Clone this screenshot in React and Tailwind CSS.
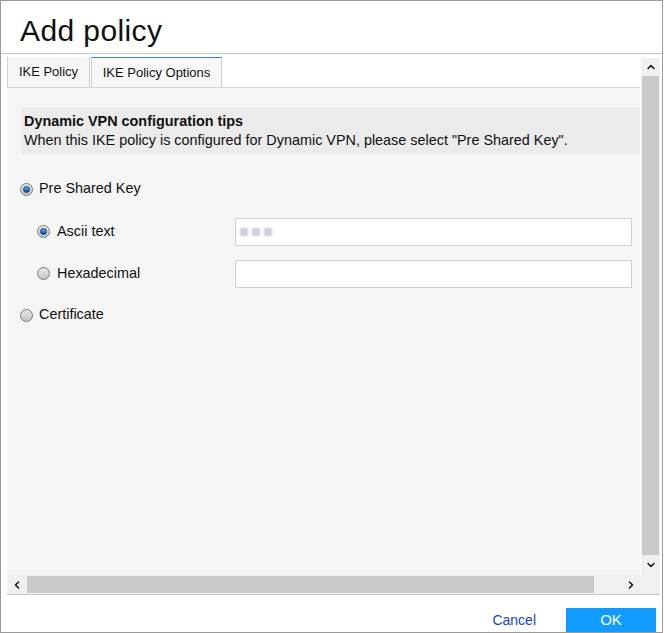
import { ChevronUp, ChevronDown, ChevronLeft, ChevronRight } from "lucide-react";

function Radio({ checked }) {
  return (
    <span className="relative inline-flex w-[13px] h-[13px] rounded-full border border-[#7a7a7a] bg-gradient-to-b from-[#e8e8e8] to-[#c4c4c4] items-center justify-center shrink-0">
      {checked && (
        <span className="w-[7px] h-[7px] rounded-full bg-gradient-to-b from-[#5fb4f0] to-[#0a4f9e] border border-[#083d7a]" />
      )}
    </span>
  );
}

function App() {
  return (
    <div
      className="w-[663px] h-[633px] bg-white border border-[#9a9a9a] flex flex-col text-[#111]"
      style={{ fontFamily: '"Liberation Sans", Arial, sans-serif' }}
    >
      {/* header */}
      <div className="h-[53px] border-b border-[#c6c6c6] flex items-center pl-[19px] pt-[7px] shrink-0">
        <h1 className="text-[30px] leading-none tracking-[0.4px]">Add policy</h1>
      </div>

      {/* body */}
      <div className="flex-1 flex flex-col pl-[6px] pr-[2px] pt-[4px]">
        <div className="flex flex-1">
          <div className="flex-1 flex flex-col">
            {/* tabs */}
            <div className="h-[30px] flex items-end border-b border-[#d6d6d6] shrink-0">
              <div className="h-[30px] w-[83px] border-l border-r border-[#cfcfcf] bg-[#f6f6f6] flex items-center justify-center text-[13px]">
                IKE Policy
              </div>
              <div className="ml-[1px] h-[30px] w-[131px] border-t border-t-[#3b7fe0] border-l border-r border-[#cfcfcf] bg-[#f7f7f7] flex items-center justify-center text-[13px]">
                IKE Policy Options
              </div>
            </div>
            {/* content */}
            <div className="flex-1 bg-[#f5f5f5] pl-[15px] pt-[19px] text-[14.4px]">
              <div className="bg-[#ebebeb] h-[47px] px-[2px] pt-[5px] leading-[19px]">
                <div className="font-bold">Dynamic VPN configuration tips</div>
                <div>When this IKE policy is configured for Dynamic VPN, please select "Pre Shared Key".</div>
              </div>
              <div className="mt-[27px] -ml-[2px] flex items-center gap-[6px] h-[16px]">
                <Radio checked />
                <span>Pre Shared Key</span>
              </div>
              <div className="mt-[21px] flex items-center h-[28px] pl-[15px]">
                <div className="flex items-center gap-[7px] w-[198px]">
                  <Radio checked />
                  <span>Ascii text</span>
                </div>
                <div className="w-[397px] h-[28px] bg-white border border-[#cfcfcf] flex items-center pl-[4px] gap-[4px]">
                  <span className="w-[8px] h-[8px] bg-[#cfcbd4] blur-[1px]" />
                  <span className="w-[8px] h-[8px] bg-[#cfcbd4] blur-[1px]" />
                  <span className="w-[8px] h-[8px] bg-[#cfcbd4] blur-[1px]" />
                </div>
              </div>
              <div className="mt-[14px] flex items-center h-[28px] pl-[15px]">
                <div className="flex items-center gap-[7px] w-[198px]">
                  <Radio />
                  <span>Hexadecimal</span>
                </div>
                <div className="w-[397px] h-[28px] bg-white border border-[#cfcfcf]" />
              </div>
              <div className="mt-[19px] -ml-[2px] flex items-center gap-[6px] h-[16px]">
                <Radio />
                <span>Certificate</span>
              </div>
            </div>
          </div>
          {/* vertical scrollbar */}
          <div className="w-[19px] flex flex-col bg-[#f0f0f0] ml-[1px]">
            <div className="h-[18px] flex items-center justify-center">
              <ChevronUp size={12} strokeWidth={3} color="#111" />
            </div>
            <div className="flex-1 bg-[#c9c9c9] mx-[1px]" />
            <div className="h-[20px] flex items-center justify-center">
              <ChevronDown size={12} strokeWidth={3} color="#111" />
            </div>
          </div>
        </div>
        {/* horizontal scrollbar */}
        <div className="h-[20px] flex border-b border-[#c8c8c8] shrink-0">
          <div className="w-[634px] flex bg-[#f0f0f0]">
            <div className="w-[20px] flex items-center justify-center">
              <ChevronLeft size={12} strokeWidth={3} color="#111" />
            </div>
            <div className="w-[567px] bg-[#c9c9c9] my-[1px]" />
            <div className="flex-1 flex items-center justify-end pr-[4px]">
              <ChevronRight size={12} strokeWidth={3} color="#111" />
            </div>
          </div>
          <div className="flex-1 bg-[#f0f0f0]" />
        </div>
      </div>

      {/* footer */}
      <div className="h-[37px] flex items-end justify-end shrink-0 pr-[6px]">
        <button className="mr-[30px] text-[14px] text-[#1a3fc2] h-[24px]">Cancel</button>
        <button className="w-[90px] h-[24px] bg-[#0f9bff] text-white text-[15px]">OK</button>
      </div>
    </div>
  );
}

export default App;
